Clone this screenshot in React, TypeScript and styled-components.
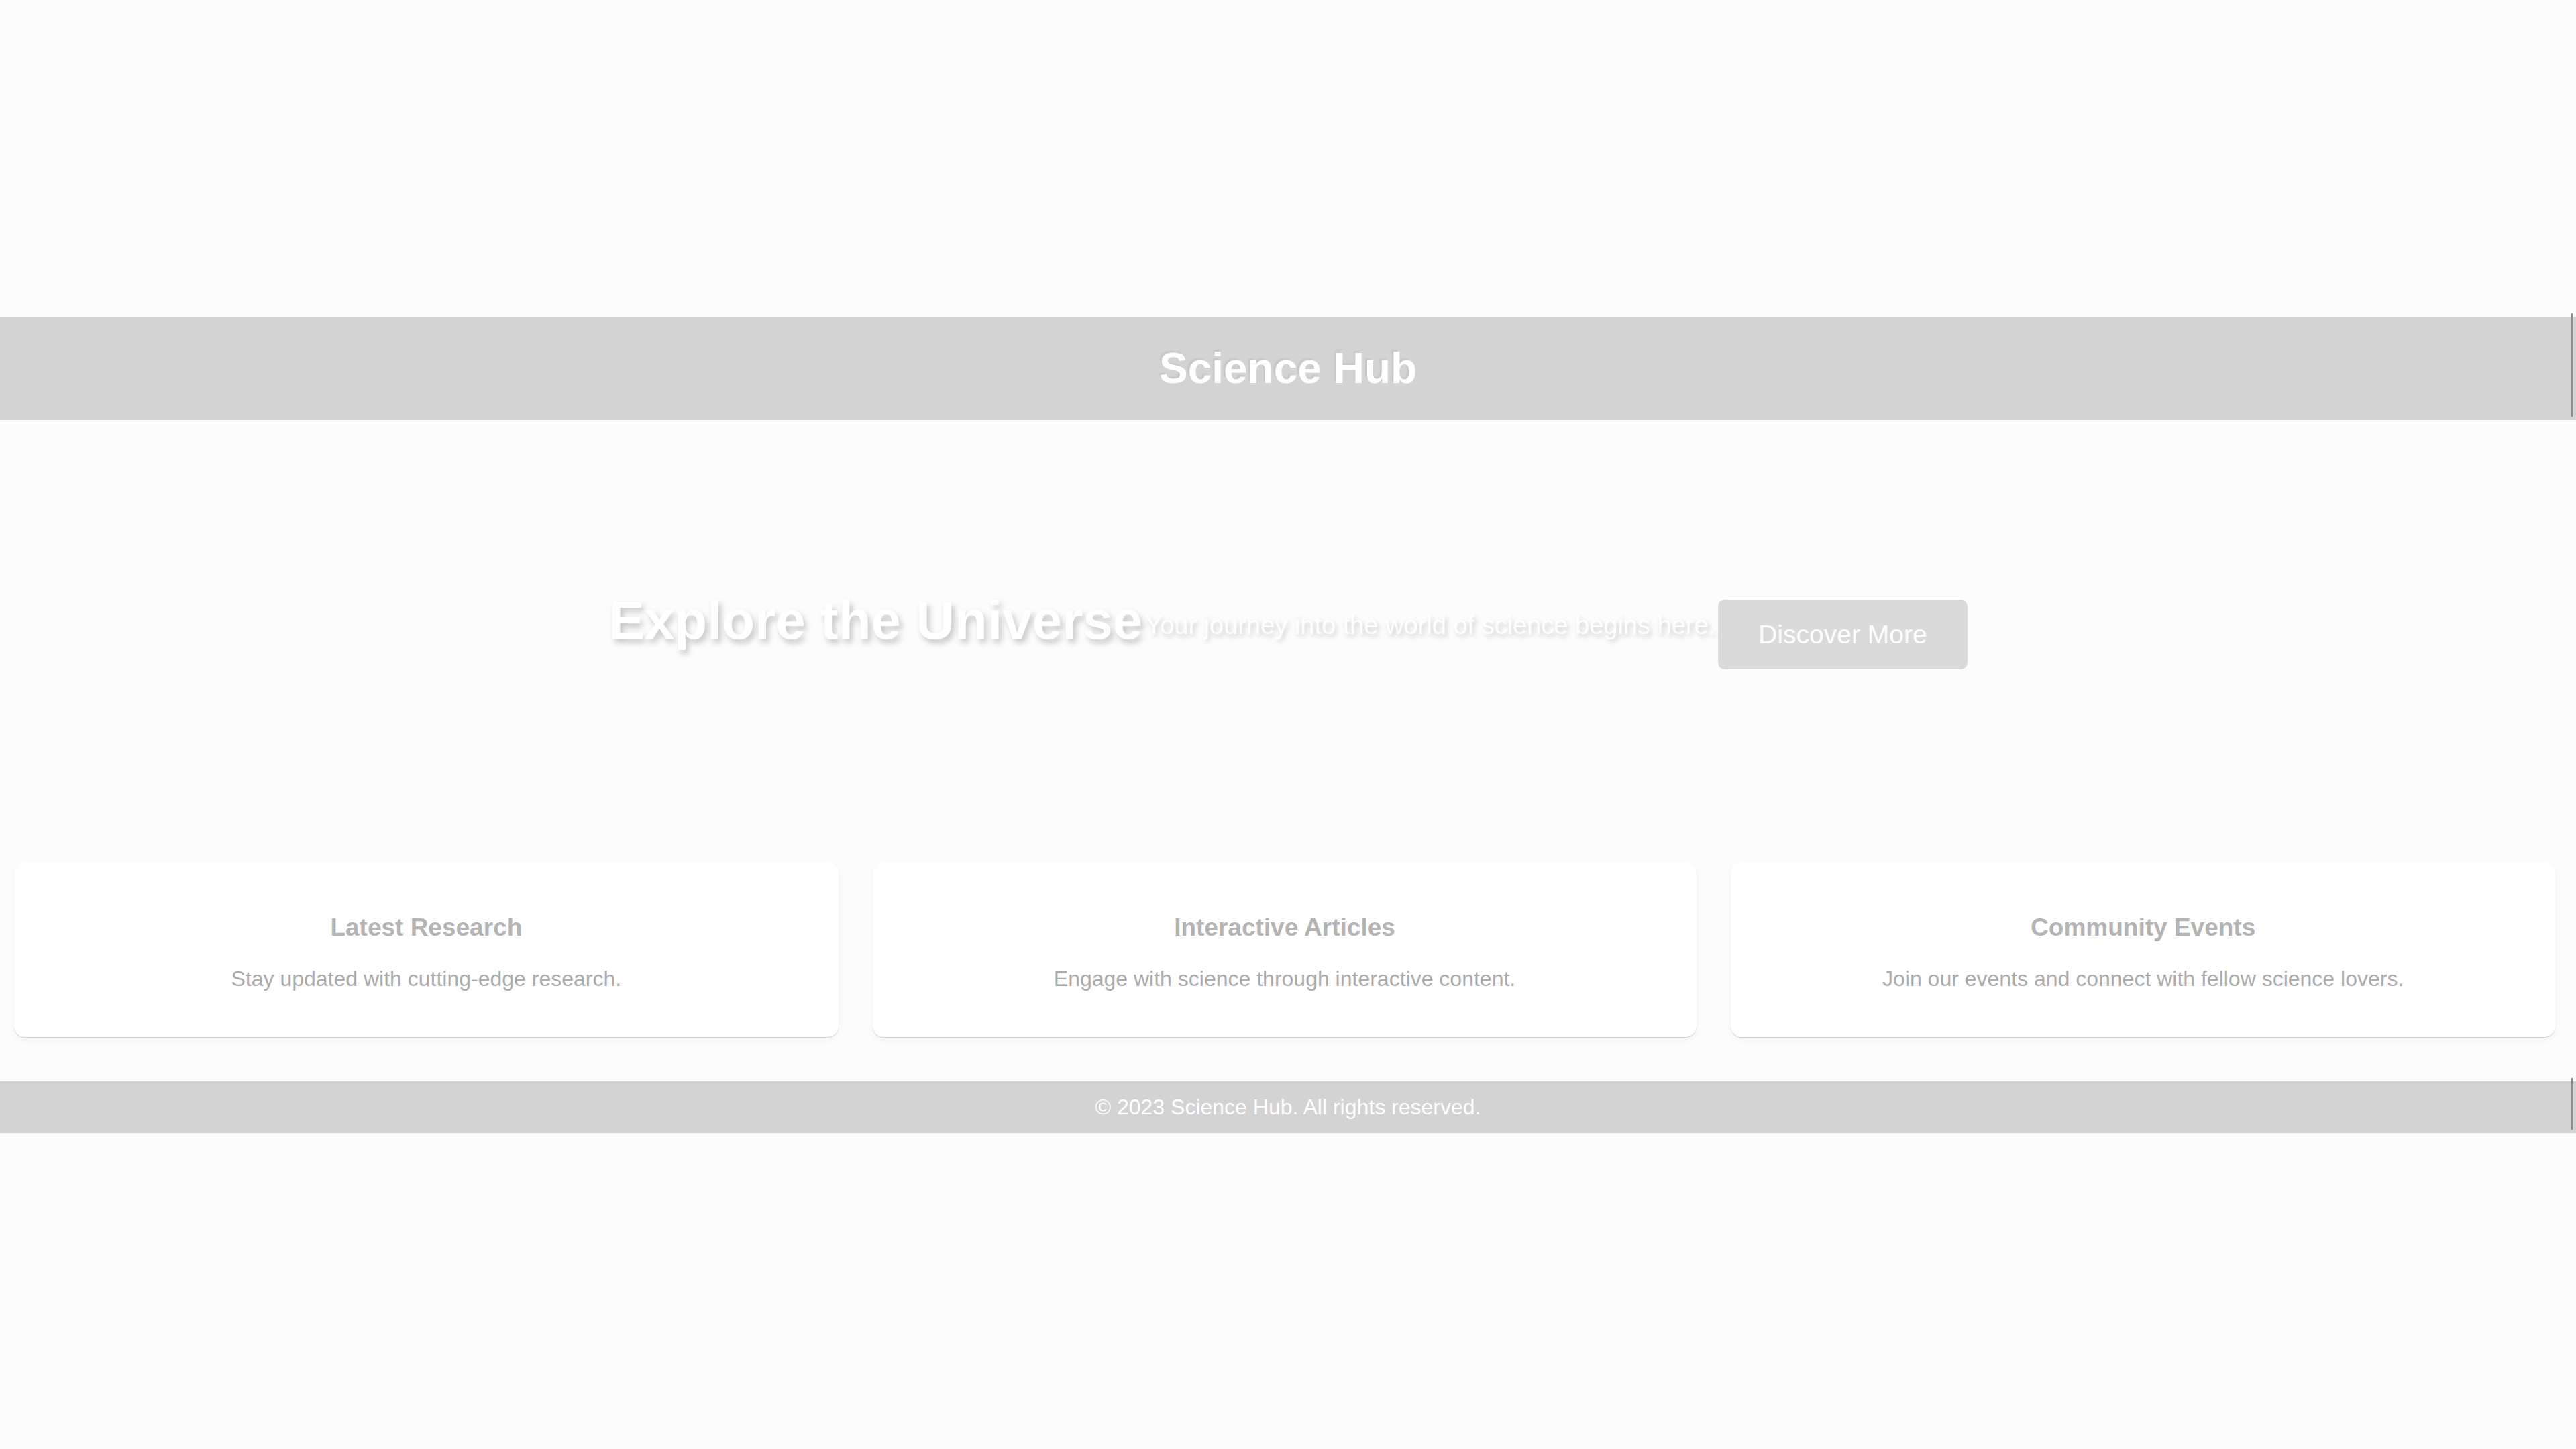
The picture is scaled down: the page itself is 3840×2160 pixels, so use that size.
import React from "react";
import styled, { createGlobalStyle } from "styled-components";

const GlobalStyle = createGlobalStyle`
  html, body {
    margin: 0;
    padding: 0;
    background: #fcfcfc;
    font-family: "Liberation Sans", Arial, sans-serif;
  }
  #root {
    min-height: 100vh;
    display: flex;
    flex-direction: column;
    justify-content: center;
  }
`;

const Page = styled.div`
  display: flex;
  flex-direction: column;
  width: 100%;
`;

const Bar = styled.div<{ $pad: number }>`
  position: relative;
  background: #d3d3d3;
  color: #ffffff;
  text-align: center;
  padding: ${(p) => p.$pad}px 0;
  &::after {
    content: "";
    position: absolute;
    right: 5px;
    top: -5px;
    bottom: 5px;
    width: 2px;
    background: #8c8c8c;
  }
`;

const Title = styled.h1`
  margin: 0;
  font-size: 64px;
  font-weight: 700;
  color: #ffffff;
  text-shadow: -3px -3px 0 rgba(150, 150, 150, 0.18);
`;

const Hero = styled.section`
  display: flex;
  flex-direction: row;
  justify-content: center;
  align-items: center;
  padding: 253px 0;
`;

const HeroHeading = styled.h2`
  margin: 0 0 42px 0;
  font-size: 80px;
  font-weight: 700;
  color: #ffffff;
  white-space: nowrap;
  text-shadow: 4px 6px 10px rgba(0, 0, 0, 0.22);
`;

const HeroText = styled.p`
  margin: 0 4px 26px 4px;
  font-size: 38px;
  color: #ffffff;
  white-space: nowrap;
  text-shadow: 3px 4px 7px rgba(0, 0, 0, 0.2);
`;

const HeroButton = styled.button`
  height: 104px;
  padding: 0 60px;
  border: none;
  border-radius: 10px;
  background: #dadada;
  color: #ffffff;
  font-family: "Liberation Sans", Arial, sans-serif;
  font-size: 39px;
  cursor: pointer;
`;

const Cards = styled.section`
  display: grid;
  grid-template-columns: repeat(3, 1fr);
  gap: 51px;
  padding: 19px 31px 66px 21px;
`;

const Card = styled.article`
  background: #ffffff;
  border-radius: 16px;
  padding: 40px 20px 36px;
  text-align: center;
  box-shadow: 0 1px 1px rgba(0, 0, 0, 0.16), 0 5px 12px rgba(0, 0, 0, 0.035);
`;

const CardTitle = styled.h3`
  margin: 37px 0;
  font-size: 37px;
  font-weight: 700;
  color: #b4b4b4;
`;

const CardText = styled.p`
  margin: 32px 0;
  font-size: 32px;
  color: #ababab;
`;

const FooterText = styled.p`
  margin: 0;
  font-size: 32px;
  color: #ffffff;
`;

const cards = [
  { title: "Latest Research", text: "Stay updated with cutting-edge research." },
  { title: "Interactive Articles", text: "Engage with science through interactive content." },
  { title: "Community Events", text: "Join our events and connect with fellow science lovers." },
];

export default function App() {
  return (
    <>
      <GlobalStyle />
      <Page>
        <Bar as="header" $pad={40}>
          <Title>Science Hub</Title>
        </Bar>
        <Hero>
          <HeroHeading>Explore the Universe</HeroHeading>
          <HeroText>Your journey into the world of science begins here.</HeroText>
          <HeroButton>Discover More</HeroButton>
        </Hero>
        <Cards>
          {cards.map((c) => (
            <Card key={c.title}>
              <CardTitle>{c.title}</CardTitle>
              <CardText>{c.text}</CardText>
            </Card>
          ))}
        </Cards>
        <Bar as="footer" $pad={20}>
          <FooterText>© 2023 Science Hub. All rights reserved.</FooterText>
        </Bar>
      </Page>
    </>
  );
}
